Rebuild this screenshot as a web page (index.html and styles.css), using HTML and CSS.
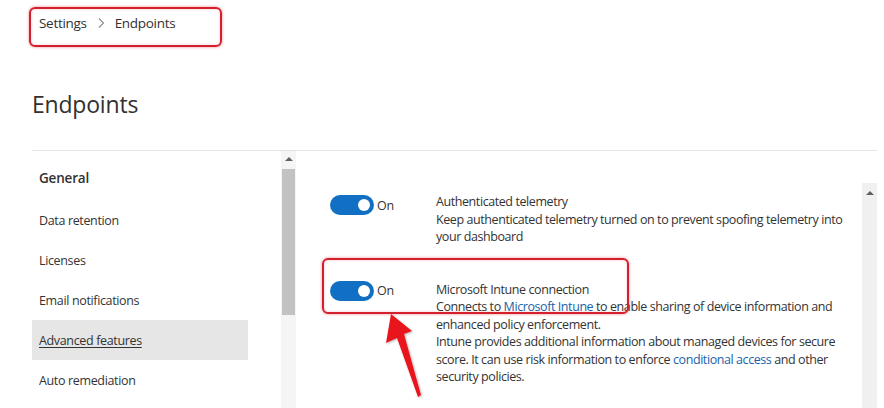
FILE: index.html
```html
<!DOCTYPE html>
<html>
<head>
<meta charset="utf-8">
<link rel="stylesheet" href="styles.css">
</head>
<body>
<div class="page">
  <nav class="crumb">
    <span>Settings</span>
    <svg class="chev" width="8" height="12" viewBox="0 0 8 12"><path d="M2 1.5 L6.5 6 L2 10.5" fill="none" stroke="#8a8a8a" stroke-width="1.1"/></svg>
    <span>Endpoints</span>
  </nav>
  <h1 class="title">Endpoints</h1>
  <div class="panel">
    <aside class="side">
      <div class="nav">
        <div class="nav-head">General</div>
        <div class="nav-item">Data retention</div>
        <div class="nav-item">Licenses</div>
        <div class="nav-item">Email notifications</div>
        <div class="nav-item selected"><span class="u">Advanced features</span></div>
        <div class="nav-item">Auto remediation</div>
      </div>
      <div class="vscroll left">
        <div class="up"></div>
        <div class="thumb"></div>
      </div>
    </aside>
    <section class="content">
      <div class="rows">
        <div class="row">
          <div class="switch-wrap"><span class="switch"><span class="knob"></span></span><span class="on">On</span></div>
          <p class="desc">Authenticated telemetry<br>Keep authenticated telemetry turned on to prevent spoofing telemetry into<br>your dashboard</p>
        </div>
        <div class="row second">
          <div class="switch-wrap"><span class="switch"><span class="knob"></span></span><span class="on">On</span></div>
          <p class="desc">Microsoft Intune connection<br>Connects to <a class="link">Microsoft Intune</a> to enable sharing of device information and<br>enhanced policy enforcement.<br>Intune provides additional information about managed devices for secure<br>score. It can use risk information to enforce <a class="link">conditional access</a> and other<br>security policies.</p>
        </div>
      </div>
      <div class="vscroll right">
        <div class="up"></div>
      </div>
    </section>
  </div>

  <div class="mark mark-crumb"></div>
  <div class="mark mark-intune"></div>
  <svg class="arrow" width="884" height="408" viewBox="0 0 884 408">
    <defs>
      <filter id="sh" x="-20%" y="-20%" width="140%" height="140%">
        <feDropShadow dx="1" dy="1" stdDeviation="1.2" flood-color="#000" flood-opacity="0.3"/>
      </filter>
    </defs>
    <polygon points="391,314 412,331 404,334 421,395 418,397 397,338 386,343" fill="#e8161f" filter="url(#sh)"/>
  </svg>
</div>
</body>
</html>
```
FILE: styles.css
```css
* { box-sizing: border-box; }
html, body { margin: 0; padding: 0; background: #fff; }
body {
  font-family: "Open Sans", "Noto Sans", sans-serif;
  color: #323130;
  width: 884px;
  height: 408px;
  overflow: hidden;
}
.page { position: relative; width: 884px; height: 408px; }

.crumb {
  height: 46px;
  display: flex;
  align-items: center;
  padding-left: 39px;
  font-size: 13.5px;
  letter-spacing: -0.3px;
  color: #323130;
}
.chev { margin: 0 10px 0 10px; }

.title {
  margin: 42px 0 30px 32px;
  font-size: 23px;
  line-height: 32px;
  font-weight: 400;
  letter-spacing: -0.2px;
  color: #323130;
}

.panel {
  margin-left: 32px;
  width: 845px;
  height: 258px;
  border-top: 1px solid #e3e3e3;
  display: flex;
}

.side { width: 264px; display: flex; flex: none; }
.nav { width: 249px; padding-top: 9px; }
.nav-head {
  height: 36px;
  line-height: 36px;
  padding-left: 7px;
  font-size: 13.5px;
  font-weight: 600;
  letter-spacing: -0.2px;
  margin-bottom: 4px;
}
.nav-item {
  width: 216px;
  height: 40px;
  line-height: 41px;
  padding-left: 7px;
  font-size: 12.5px;
  letter-spacing: -0.35px;
  color: #333;
}
.nav-item.selected { background: #e6e6e6; }
.u { text-decoration: underline; text-underline-offset: 2px; }

.vscroll { width: 15px; background: #f3f3f3; position: relative; flex: none; }
.vscroll.left { background: #f5f5f5; }
.up {
  width: 0; height: 0;
  margin: 6px auto 0;
  border-left: 4px solid transparent;
  border-right: 4px solid transparent;
  border-bottom: 4px solid #606060;
}
.thumb {
  margin: 8px 0 0 1px;
  width: 13px;
  height: 146px;
  background: #c2c2c2;
}

.content { flex: 1; display: flex; }
.rows { flex: 1; padding: 42px 0 0 34px; }
.vscroll.right { margin-top: 32px; background: #f0f0f0; }
.vscroll.right .up { margin-top: 8px; }

.row { display: flex; align-items: flex-start; }
.row.second { margin-top: 35px; }
.switch-wrap { width: 106px; flex: none; display: flex; align-items: center; margin-top: 2px; }
.row.second .switch-wrap { margin-top: 0; }
.switch {
  width: 44px;
  height: 20px;
  border-radius: 10px;
  background: #1170c4;
  position: relative;
  flex: none;
}
.knob {
  position: absolute;
  right: 4px;
  top: 4px;
  width: 12px;
  height: 12px;
  border-radius: 50%;
  background: #fff;
}
.on { margin-left: 3px; font-size: 12.5px; color: #333; letter-spacing: -0.2px; }

.desc {
  margin: 0;
  font-size: 12.5px;
  line-height: 17.5px;
  letter-spacing: -0.42px;
  white-space: nowrap;
  color: #333;
}
.link { color: #1a62a8; text-decoration: none; }

.mark {
  position: absolute;
  border: 2px solid #d3202c;
  border-radius: 6px;
  box-shadow: 0 0 3px rgba(211, 32, 44, 0.55), inset 0 0 3px rgba(211, 32, 44, 0.25);
}
.mark-crumb { left: 29px; top: 7px; width: 193px; height: 40px; }
.mark-intune { left: 322px; top: 258px; width: 307px; height: 56px; }
.arrow { position: absolute; left: 0; top: 0; pointer-events: none; }
```
